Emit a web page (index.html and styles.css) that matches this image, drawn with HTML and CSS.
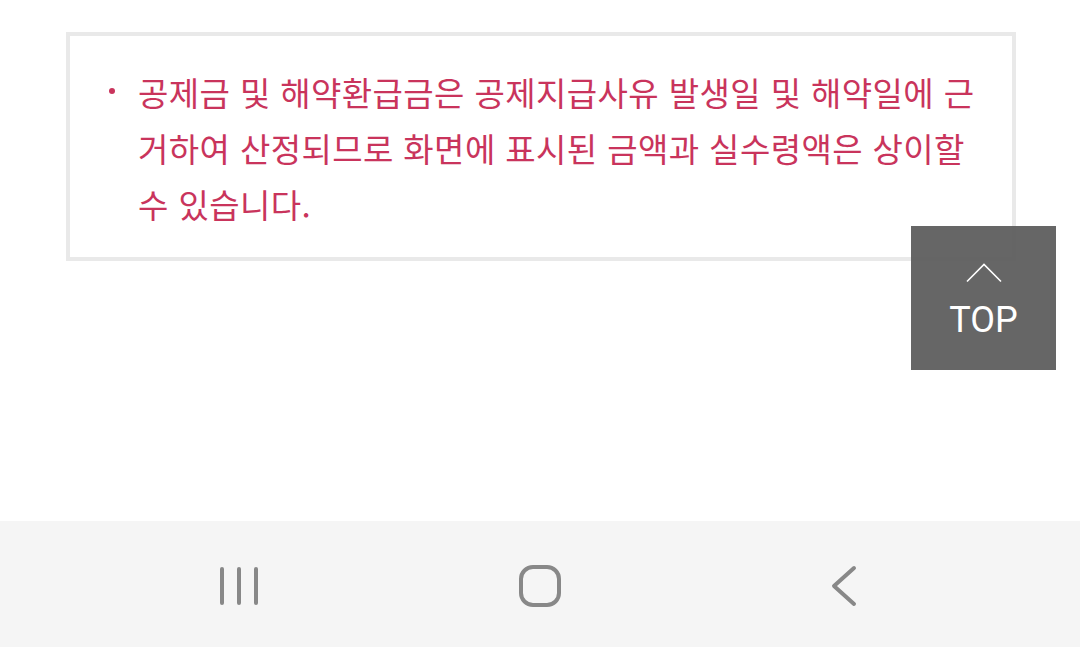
FILE: index.html
```html
<!DOCTYPE html>
<html lang="ko">
<head>
  <meta charset="UTF-8">
  <meta name="viewport" content="width=device-width, initial-scale=1.0">
  <link rel="stylesheet" href="styles.css">
  <title>공제금 안내</title>
</head>
<body>

<main class="content">
  <div class="notice">
    <ul class="notice-list">
      <li>공제금 및 해약환급금은 공제지급사유 발생일 및 해약일에 근거하여 산정되므로 화면에 표시된 금액과 실수령액은 상이할 수 있습니다.</li>
    </ul>
  </div>

  <a class="top-btn" href="#">
    <svg class="top-arrow" width="36" height="20" viewBox="0 0 36 20">
      <polyline points="1,18.5 18,1.5 35,18.5" fill="none" stroke="#fff" stroke-width="1.6"/>
    </svg>
    <span>TOP</span>
  </a>
</main>

<nav class="navbar">
  <span class="nav-item">
    <svg width="40" height="40" viewBox="0 0 40 40">
      <g stroke="#888" stroke-width="4" stroke-linecap="round">
        <line x1="3" y1="3" x2="3" y2="37"/>
        <line x1="20" y1="3" x2="20" y2="37"/>
        <line x1="37" y1="3" x2="37" y2="37"/>
      </g>
    </svg>
  </span>
  <span class="nav-item">
    <svg width="44" height="44" viewBox="0 0 44 44">
      <rect x="3" y="3" width="38" height="38" rx="12" fill="none" stroke="#888" stroke-width="4"/>
    </svg>
  </span>
  <span class="nav-item">
    <svg width="28" height="42" viewBox="0 0 28 42">
      <polyline points="24,3 4,21 24,39" fill="none" stroke="#888" stroke-width="4" stroke-linecap="round" stroke-linejoin="round"/>
    </svg>
  </span>
</nav>

</body>
</html>
```

FILE: styles.css
```css
html, body {
  margin: 0;
  padding: 0;
}

body {
  font-family: "Noto Sans CJK KR", "Noto Sans", sans-serif;
  background-color: #fff;
  width: 1080px;
  height: 647px;
  display: flex;
  flex-direction: column;
  overflow: hidden;
}

.content {
  position: relative;
  flex: 1;
  padding: 32px 64px 0 66px;
}

.notice {
  border: 4px solid #e9e9e9;
  padding: 28px 22px 25px 38px;
}

.notice-list {
  list-style: none;
  margin: 0;
  padding: 0;
}

.notice-list li {
  position: relative;
  padding-left: 30px;
  font-size: 33px;
  line-height: 56px;
  letter-spacing: 0.4px;
  color: #c9345c;
}

.notice-list li::before {
  content: "";
  position: absolute;
  left: 1px;
  top: 24px;
  width: 6px;
  height: 6px;
  border-radius: 50%;
  background-color: #c9345c;
}

.top-btn {
  position: absolute;
  left: 911px;
  top: 226px;
  width: 145px;
  height: 144px;
  background-color: rgba(90, 90, 90, 0.93);
  color: #fff;
  text-decoration: none;
  display: flex;
  flex-direction: column;
  align-items: center;
  box-sizing: border-box;
  padding-top: 37px;
}

.top-arrow {
  display: block;
}

.top-btn span {
  font-family: Roboto, "Liberation Sans", sans-serif;
  font-size: 36px;
  line-height: 40px;
  margin-top: 17px;
}

.navbar {
  height: 126px;
  box-sizing: border-box;
  padding-top: 4px;
  background-color: #f5f5f5;
  display: flex;
  align-items: center;
}

.nav-item {
  display: flex;
  justify-content: center;
  align-items: center;
}

.nav-item:nth-child(1) {
  margin-left: 219px;
}

.nav-item:nth-child(2) {
  margin-left: 259px;
}

.nav-item:nth-child(3) {
  margin-left: 268px;
}
```
